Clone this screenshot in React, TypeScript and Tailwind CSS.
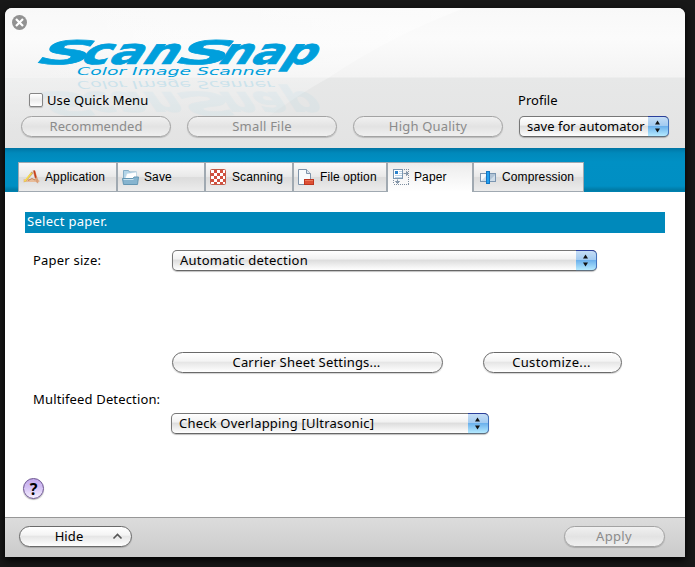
import type { ReactNode } from 'react';

function LogoText({ nameOpacity = 1, taglineOpacity = 1 }: { nameOpacity?: number; taglineOpacity?: number }) {
  return (
    <>
      <g fontFamily="DejaVu Sans" fontWeight="bold" fontStyle="oblique" fill="#009fdc" stroke="#009fdc" strokeWidth="0.7" opacity={nameOpacity}>
        <text transform="translate(37 63.500) skewX(-22)" fontSize="32.500" textLength="52" lengthAdjust="spacingAndGlyphs">S</text>
        <text transform="translate(80 63.500) skewX(-22)" fontSize="36" textLength="97" lengthAdjust="spacingAndGlyphs">can</text>
        <text transform="translate(176 63.500) skewX(-22)" fontSize="32.500" textLength="52" lengthAdjust="spacingAndGlyphs">S</text>
        <text transform="translate(218 63.500) skewX(-22)" fontSize="36" textLength="97" lengthAdjust="spacingAndGlyphs">nap</text>
      </g>
      <text x="77" y="74.500" fontFamily="DejaVu Sans" fontStyle="oblique" fontSize="10" fill="#009fdc" opacity={taglineOpacity} textLength="197" lengthAdjust="spacingAndGlyphs">
        Color Image Scanner
      </text>
    </>
  );
}

function Logo() {
  return (
    <svg width="320" height="110" viewBox="20 18 320 110" className="block overflow-visible" role="img" aria-label="ScanSnap Color Image Scanner">
      <LogoText />
      <g transform="matrix(1 0 0 -1 0 155)" aria-hidden="true">
        <LogoText nameOpacity={0.035} taglineOpacity={0.14} />
      </g>
    </svg>
  );
}

function Pill({ className, disabled, children }: { className: string; disabled?: boolean; children: ReactNode }) {
  return (
    <button
      className={`flex h-[21px] shrink-0 items-center justify-center rounded-full border pb-[2px] ${
        disabled
          ? 'border-[#a3a3a3] bg-linear-to-b from-[#f1f1f1] via-[#e3e3e3] to-[#f0f0f0] text-[#8b8b8b]'
          : 'border-[#6a6a6a] bg-[linear-gradient(#fff_0%,#f4f4f4_42%,#e6e6e6_50%,#fff_100%)] text-black'
      } shadow-[0_1px_1px_rgba(0,0,0,0.18)] ${className}`}
    >
      {children}
    </button>
  );
}

function Popup({ className, children }: { className: string; children: ReactNode }) {
  return (
    <button
      className={`flex h-[21px] shrink-0 items-stretch rounded-[5px] border border-[#777] border-b-[#666] bg-[linear-gradient(#fff_0%,#f2f2f2_40%,#dedede_50%,#fff_100%)] pl-[7px] text-left text-black shadow-[0_1px_1px_rgba(0,0,0,0.25)] ${className}`}
    >
      <span className="min-w-0 flex-1 self-center pb-[2px] whitespace-nowrap">{children}</span>
      <span className="-my-px -mr-px flex w-[21px] shrink-0 items-center justify-center rounded-r-[5px] border border-l-0 border-t-[#2b3f9b] border-r-[#4272bd] border-b-[#5f6f7f] bg-[linear-gradient(#c5ddf5_0%,#a3cbf1_45%,#6cb1ec_50%,#b5eaff_100%)] pr-px pb-px">
        <svg width="7" height="13" viewBox="0 0 7 13">
          <path d="M3.500 0.500 6 4.500H1zM3.500 12.500 6 8.500H1z" fill="#111" />
        </svg>
      </span>
    </button>
  );
}

const icons = {
  app: (
    <svg width="17" height="16" viewBox="0 0 17 16">
      <path d="M.500 10h14l2 1.500v1.500H.500z" fill="#e8bd9b" />
      <path d="M9.500 1.500 12 1.500 15.500 12 15 14.500 13 13z" fill="#d9a07a" />
      <path d="M10.500 1.500 12 1.500 13.500 8.500 12 9z" fill="#c63d1d" />
      <path d="M.500 13.500 8.500 2.500l2 1.500L3 12.500z" fill="#c9a272" />
      <path d="M1.500 12.500 8.500 4" stroke="#f7dd4c" strokeWidth="1.400" />
      <path d="M5 11.500l4-2 3 1.500" stroke="#c78355" fill="none" />
    </svg>
  ),
  save: (
    <svg width="17" height="16" viewBox="0 0 17 16">
      <path d="M1.500 13V1.500h5l1 1.500h7V13z" fill="#b4d5e8" stroke="#86aec7" />
      <path d="M3 9.500 5 4.500l9.500-1.500v7z" fill="#fff" stroke="#c3d9e5" strokeWidth=".6" />
      <path d="M.500 9.500h10.500l1-1.500h4.500l-1 7.500h-14z" fill="#86b4cf" stroke="#6496b3" />
      <path d="M1.500 10.500h10" stroke="#c9e2ef" />
    </svg>
  ),
  scan: (
    <svg width="16" height="16" viewBox="0 0 16 16">
      <rect x=".5" y=".5" width="15" height="15" rx="1" fill="#fff" stroke="#c25a48" />
      <path d="M4 1h3v3H4zM10 1h3v3h-3zM1 4h3v3H1zM7 4h3v3H7zM13 4h2v3h-2zM4 7h3v3H4zM10 7h3v3h-3zM1 10h3v3H1zM7 10h3v3H7zM13 10h2v3h-2zM4 13h3v2H4zM10 13h3v2h-3z" fill="#d2503f" />
    </svg>
  ),
  file: (
    <svg width="16" height="16" viewBox="0 0 16 16">
      <path d="M.5.5h8l4 4v11H.5z" fill="#f7fafc" stroke="#7e93a9" />
      <path d="M8.500.5v4h4" fill="#dce6ef" stroke="#7e93a9" />
      <rect x="6.500" y="10.500" width="9" height="5" fill="#dd5035" stroke="#bd3620" />
      <path d="M7 11.500h8" stroke="#ec7c5f" />
    </svg>
  ),
  paper: (
    <svg width="16" height="16" viewBox="0 0 16 16">
      <rect x=".5" y=".5" width="9" height="9" fill="#fff" stroke="#7c97b0" />
      <rect x="2" y="2" width="3" height="3" fill="#2b83cd" />
      <path d="M6 2.500h3M6 4.500h3M2 6.500h7M2 8.500h7" stroke="#b9d2e6" />
      <path d="M11 .5h5M15.500 2v13M1 15.500h15M.5 11v4" stroke="#7f8fa0" strokeDasharray="1 1" />
      <path d="M10.500 4.500h3v-2l2 2-2 2v-2M4.500 10.500v2h-2l2 2 2-2h-2" stroke="#8295a8" fill="#8295a8" />
    </svg>
  ),
  comp: (
    <svg width="16" height="13" viewBox="0 0 16 13">
      <rect x=".5" y="2.500" width="15" height="8" fill="#f4f8fb" stroke="#7b96b1" />
      <path d="M9 3h6v7H9z" fill="#b0c3d5" />
      <path d="M1 10 6 5v5H1zM10 9l5-5v6h-5z" fill="#cfdde9" />
      <rect x="6.500" y=".5" width="3" height="12" fill="#22a0ee" stroke="#1376c4" />
    </svg>
  ),
};

const tabs = [
  { icon: icons.app, label: 'Application', cls: 'w-[98px] border-l pl-[4px] gap-[5px]' },
  { icon: icons.save, label: 'Save', cls: 'w-[88px] border-l-2 pl-[4px] gap-[5px]' },
  { icon: icons.scan, label: 'Scanning', cls: 'w-[88px] border-l-2 pl-[4px] gap-[6px]' },
  { icon: icons.file, label: 'File option', cls: 'w-[94px] border-l-2 pl-[4px] gap-[6px]' },
  { icon: icons.paper, label: 'Paper', cls: 'w-[86px] border-l-2 pl-[5px] gap-[5px]', active: true },
  { icon: icons.comp, label: 'Compression', cls: 'w-[112px] border-l-2 pl-[6px] gap-[6px] border-r' },
];

export default function App() {
  return (
    <div className="h-[567px] w-[695px] overflow-hidden bg-[#181818] pt-2 pl-[5px] font-['Noto_Sans','Open_Sans',sans-serif] text-[13px] leading-[16px] text-black">
      <main className="flex h-[549px] w-[680px] flex-col overflow-hidden rounded-t-[7px] bg-white shadow-[0_3px_8px_#000]">
        <header className="relative h-[140px] shrink-0 bg-[linear-gradient(#f8f8f8_0px,#fbfbfb_30px,#f3f3f3_69px,#e7e8e8_70px,#e3e3e3_140px)]">
          <svg className="absolute inset-0" width="680" height="140" viewBox="0 0 680 140">
            <defs>
              <linearGradient id="sheen" x1="0" x2="1" y1="0" y2="0">
                <stop offset="0" stopColor="#fff" stopOpacity="0" />
                <stop offset="1" stopColor="#fff" stopOpacity=".45" />
              </linearGradient>
              <linearGradient id="sheenLow" x1="0" x2="0" y1="69" y2="125" gradientUnits="userSpaceOnUse">
                <stop offset="0" stopColor="#fff" stopOpacity=".35" />
                <stop offset="1" stopColor="#fff" stopOpacity="0" />
              </linearGradient>
            </defs>
            <path d="M0 0H460Q385 28 325 69H0z" fill="url(#sheen)" />
            <path d="M0 69H325Q290 88 245 122H0z" fill="url(#sheenLow)" />
          </svg>
          <div className="absolute top-[10px] left-[15px]">
            <Logo />
          </div>
          <div className="relative flex h-[84px] items-start pt-[7px] pl-[7px]">
            <svg width="15" height="15" viewBox="0 0 15 15" aria-label="Close">
              <circle cx="7.500" cy="7.500" r="7.500" fill="#929292" />
              <path d="m4 4 7 7m0-7-7 7" stroke="#fff" strokeWidth="2.200" />
            </svg>
          </div>
          <div className="relative flex h-4 items-center pl-6">
            <span className="size-[14px] rounded-[2px] border border-[#858585] bg-linear-to-b from-white via-[#ececec] to-white shadow-[0_1px_1px_rgba(0,0,0,0.2)]" />
            <span className="ml-[4px] w-[471px] tracking-[0.12px]">Use Quick Menu</span>
            <span className="tracking-[0.02px]">Profile</span>
          </div>
          <div className="relative mt-2 flex gap-4 pl-4">
            <Pill className="w-[150px] tracking-[0.04px]" disabled>Recommended</Pill>
            <Pill className="w-[150px] tracking-[0.2px]" disabled>Small File</Pill>
            <Pill className="w-[150px] tracking-[0.2px]" disabled>High Quality</Pill>
            <Popup className="w-[150px] tracking-[0.02px]">save for automator</Popup>
          </div>
        </header>

        <nav className="flex h-11 shrink-0 items-end bg-[linear-gradient(#0074a3_0px,#0089bb_5px,#0090c4_14px,#008fc3_38px,#007aa5_42px,#0084b3_44px)] pl-[13px] font-['Liberation_Sans',Arial,sans-serif] text-[12px]">
          {tabs.map((t) => (
            <div
              key={t.label}
              className={`flex h-[30px] items-center border-t border-[#a0a9b1] ${
                t.active
                  ? 'bg-linear-to-b from-[#ececec] to-white pb-px'
                  : 'border-b bg-[linear-gradient(#fafafa_0%,#e9e9e9_48%,#dcdcdc_52%,#ececec_100%)]'
              } ${t.cls}`}
            >
              {t.icon}
              <span className="whitespace-nowrap tracking-[0.12px]">{t.label}</span>
            </div>
          ))}
        </nav>

        <section className="flex flex-1 flex-col">
          <h1 className="mt-5 ml-5 flex h-[21px] w-[640px] items-center bg-[#0089bb] pb-[3px] pl-[2px] tracking-[0.28px] text-white">Select paper.</h1>
          <div className="mt-[17px] flex h-[21px] items-center pl-7">
            <span className="w-[139px] pb-px tracking-[0.22px]">Paper size:</span>
            <Popup className="w-[425px] tracking-[0.23px]">Automatic detection</Popup>
          </div>
          <div className="mt-[81px] flex gap-10 pl-[167px]">
            <Pill className="w-[271px] pr-[2px] tracking-[0.18px]">Carrier Sheet Settings...</Pill>
            <Pill className="w-[139px] pr-[2px] tracking-[0.35px]">Customize...</Pill>
          </div>
          <div className="mt-[18px] pl-7 tracking-[0.15px]">Multifeed Detection:</div>
          <div className="mt-[6px] pl-[166px]">
            <Popup className="w-[318px] tracking-[0.2px]">Check Overlapping [Ultrasonic]</Popup>
          </div>
          <button className="mt-[44px] ml-[18px] flex size-[21px] items-center justify-center rounded-full border border-[#69518f] bg-[linear-gradient(#c3a9ec,#d4c1f4_45%,#f6f0ff)] text-[16px] font-bold shadow-[0_1px_1px_rgba(0,0,0,0.3)]">?</button>
        </section>

        <footer className="flex h-10 shrink-0 items-center justify-between border-t border-[#979797] bg-linear-to-b from-[#dcdcdc] to-[#cbcbcb] pr-5 pb-[2px] pl-[14px]">
          <Pill className="w-[113px] tracking-[0.1px]">
            <span className="mr-[29px] ml-[27px]">Hide</span>
            <svg width="11" height="8" viewBox="0 0 11 8">
              <path d="m1.500 6.500 4-4 4 4" fill="none" stroke="#555" strokeWidth="1.600" />
            </svg>
          </Pill>
          <Pill className="w-[101px] pr-px tracking-[0.35px]" disabled>Apply</Pill>
        </footer>
      </main>
    </div>
  );
}
